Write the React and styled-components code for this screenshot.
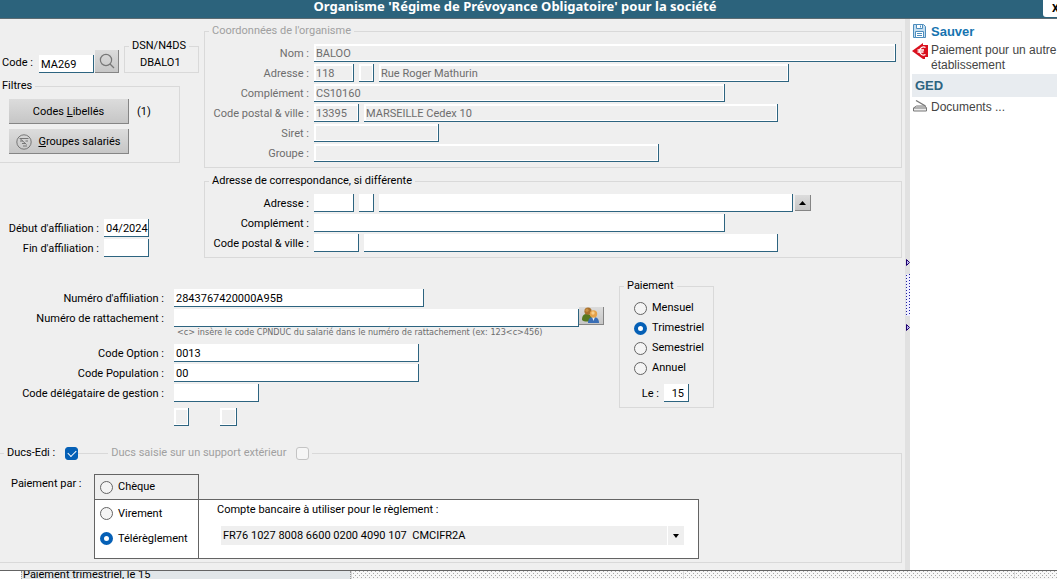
import React from 'react'
import styled, { createGlobalStyle, css } from 'styled-components'

const blue = '#2d6480'
const grey = '#efefef'
const line = '#d9d9d9'

const GlobalStyle = createGlobalStyle`
  * {
    box-sizing: border-box;
  }
  body {
    margin: 0;
    overflow: hidden;
    background: ${grey};
    color: #000;
    font-family: Roboto, "DejaVu Sans Condensed", sans-serif;
    font-size: 11px;
    line-height: 14px;
  }
  input, select, button {
    margin: 0;
    font: inherit;
    color: inherit;
  }
`

const Page = styled.div`
  display: flex;
  flex-direction: column;
  height: 100vh;
`
const TitleBar = styled.header`
  display: flex;
  align-items: flex-start;
  flex: none;
  height: 19px;
  background: #2c637c;
  border-bottom: 1px solid #5c6b72;
`
const Title = styled.h1`
  flex: 1;
  margin: 0;
  padding-right: 13px;
  font-family: "Noto Sans", sans-serif;
  font-size: 13px;
  line-height: 12px;
  font-weight: bold;
  text-align: center;
  white-space: nowrap;
  color: #fff;
`
const Close = styled.button`
  width: 14px;
  height: 17px;
  padding: 0 0 0 9px;
  overflow: hidden;
  border: 0;
  border-radius: 0 0 0 3px;
  background: #fff;
  font-weight: bold;
  line-height: 14px;
`
const Body = styled.div`
  display: flex;
  flex: 1;
  min-height: 0;
`
const Form = styled.form`
  flex: 1;
  min-width: 0;
  padding: 5px 3px 7px 0;
  white-space: nowrap;
`
const Top = styled.div`
  display: grid;
  grid-template-columns: 204px 1fr;
`
const LeftColumn = styled.div`
  padding-top: 15px;
`
const Group = styled.fieldset`
  min-width: 0;
  margin: 0;
  padding: 5px 0 4px;
  border: 1px solid ${line};
  color: ${p => (p.$muted ? '#6d6d6d' : 'inherit')};
  & + & {
    margin-top: 6px;
  }
`
const Legend = styled.legend`
  margin-left: 4px;
  padding: 0 3px;
  color: ${p => (p.$muted ? '#a0a0a0' : 'inherit')};
`
const Line = styled.div`
  display: flex;
  align-items: center;
  gap: 5px;
  height: 20px;
`
const Label = styled.label`
  flex: none;
  width: ${p => p.$w}px;
  padding: 2px ${p => p.$gap || 0}px 0 0;
  text-align: right;
`
const Field = styled.input`
  flex: ${p => (p.$w ? 'none' : 1)};
  width: ${p => (p.$w ? `${p.$w}px` : 'auto')};
  min-width: 0;
  height: 18px;
  padding: 2px 0 0 2px;
  border: 0;
  border-right: 1px solid ${blue};
  border-bottom: 1px solid ${blue};
  background: #fff;
  &:disabled {
    background: ${grey};
    color: #6d6d6d;
    box-shadow: inset 2px 2px #fff, inset -1px -1px #fff;
  }
`
const NameLine = styled(Line)`
  padding-right: 5px;
`
const CodeRow = styled.div`
  display: flex;
  align-items: flex-end;
  padding-left: 2px;
`
const CodeLabel = styled(Label)`
  line-height: 20px;
  text-align: left;
`
const raised = css`
  border: 0;
  border-right: 1px solid #858585;
  border-bottom: 1px solid #858585;
  background: linear-gradient(#dcdcdc, #c6c6c6);
`
const IconButton = styled.button`
  ${raised}
  display: flex;
  flex: none;
  align-items: center;
  justify-content: center;
  width: ${p => p.$w}px;
  height: ${p => p.$h}px;
  padding: 0;
`
const SearchButton = styled(IconButton)`
  margin: 0 5px 0 1px;
`
const PickButton = styled(IconButton)`
  margin-left: -3px;
`
const DsnGroup = styled(Group)`
  width: 75px;
  padding: 3px 0 2px 15px;
`
const DsnLegend = styled(Legend)`
  margin-left: -11px;
`
const Filters = styled(Group)`
  width: 180px;
  margin-top: 6px;
  padding: 6px 0 8px 9px;
  border-left: 0;
`
const FilterLegend = styled(Legend)`
  margin-left: -10px;
`
const FilterLine = styled.div`
  display: flex;
  align-items: center;
  gap: 8px;
  & + & {
    margin-top: 5px;
  }
`
const FilterButton = styled.button`
  ${raised}
  display: flex;
  align-items: center;
  justify-content: center;
  gap: 6px;
  width: 120px;
  height: 25px;
  padding: 2px 0 0;
`
const Dates = styled.div`
  margin-top: 55px;
`
const Middle = styled.div`
  display: flex;
  align-items: flex-start;
  padding-top: 21px;
`
const Details = styled.div`
  width: 619px;
  padding-top: 9px;
`
const WithPicker = styled.div`
  display: flex;
  align-items: center;
`
const Numbers = styled.div`
  width: 582px;
`
const Hint = styled.div`
  height: 15px;
  padding-left: 177px;
  font-family: "DejaVu Sans Condensed", sans-serif;
  font-size: 9px;
  line-height: 8px;
  color: #6d6d6d;
`
const SmallBoxes = styled.div`
  display: flex;
  gap: 31px;
  padding: 5px 0 0 174px;
`
const Frequency = styled(Group)`
  width: 95px;
`
const Choice = styled.label`
  display: flex;
  align-items: center;
  gap: 5px;
  height: ${p => p.$h || 20}px;
  padding-left: ${p => p.$left}px;
`
const DayLine = styled(Line)`
  margin-top: 5px;
`
const DayField = styled(Field)`
  padding-right: 4px;
  text-align: right;
`
const Radio = styled.input.attrs({ type: 'radio' })`
  appearance: none;
  width: 13px;
  height: 13px;
  border: 1px solid #646464;
  border-radius: 50%;
  background: #f4f4f4;
  &:checked {
    border: 4px solid #0560b6;
    background: #fff;
  }
`
const Check = styled.input.attrs({ type: 'checkbox' })`
  appearance: none;
  display: flex;
  align-items: center;
  justify-content: center;
  width: 13px;
  height: 13px;
  border: 1px solid ${p => (p.disabled ? '#c4c4c4' : '#646464')};
  border-radius: 3px;
  background: #f6f6f6;
  &:checked {
    border-color: #0560b6;
    background: #0560b6;
  }
  &:checked::after {
    content: '';
    width: 7px;
    height: 4px;
    margin-bottom: 2px;
    border: solid #fff;
    border-width: 0 0 1px 1px;
    transform: rotate(-45deg);
  }
`
const Ducs = styled(Group)`
  margin-top: 20px;
  padding: 14px 0 3px;
  border-left: 0;
`
const DucsLegend = styled.legend`
  display: flex;
  align-items: center;
  margin-left: 4px;
  padding: 0 3px;
`
const DucsLabel = styled.label`
  display: flex;
  align-items: center;
  gap: ${p => p.$gap}px;
  color: ${p => (p.$muted ? '#a0a0a0' : 'inherit')};
`
const Rule = styled.span`
  width: 30px;
  height: 1px;
  margin-right: 3px;
  background: ${line};
`
const Payment = styled.div`
  display: flex;
  gap: 12px;
  padding-left: 11px;
`
const PaymentLabel = styled.div`
  width: 71px;
  padding-top: 3px;
`
const PaymentGrid = styled.div`
  display: grid;
  grid-template-columns: 105px 500px;
`
const Cell = styled.div`
  border: 1px solid #646464;
  background: ${p => (p.$white ? '#fff' : 'transparent')};
`
const Cheque = styled(Cell)`
  grid-column: 1;
  border-bottom: 0;
`
const Modes = styled(Cell)`
  grid-column: 1;
  padding: 1px 0 7px;
`
const Account = styled(Cell)`
  grid-column: 2;
  padding: 3px 14px 0 18px;
  border-left: 0;
`
const SelectBox = styled.div`
  position: relative;
  margin: 9px 0 0 4px;
`
const Select = styled.select`
  appearance: none;
  display: block;
  width: 100%;
  height: 19px;
  padding: 0 18px 0 2px;
  border: 0;
  border-radius: 0;
  background: linear-gradient(#fff, #fff) right 16px top 0 / 1px 100% no-repeat ${grey};
`
const SelectArrow = styled.svg`
  position: absolute;
  top: 8px;
  right: 5px;
  pointer-events: none;
`
const Splitter = styled.div`
  display: flex;
  flex: none;
  flex-direction: column;
  align-items: flex-end;
  justify-content: center;
  gap: 8px;
  width: 5px;
  background: #e1e1e1;
`
const Sidebar = styled.aside`
  flex: none;
  width: 147px;
  padding: 5px 0 0 2px;
  background: #fff;
  font-family: "Liberation Sans", Arial, sans-serif;
  font-size: 12px;
  line-height: 15px;
  white-space: nowrap;
`
const Action = styled.a`
  display: flex;
  align-items: flex-start;
  gap: 3px;
  padding: ${p => p.$pad || '0'};
  font-size: ${p => (p.$main ? 13 : 12)}px;
  font-weight: ${p => (p.$main ? 'bold' : 'normal')};
  color: ${p => (p.$main ? '#1674b0' : '#444')};
  text-decoration: none;
  svg {
    flex: none;
    width: 16px;
  }
`
const SidebarTitle = styled.h2`
  margin: 0;
  padding: 0 3px;
  background: #e8ecf0;
  font-size: 13px;
  line-height: 23px;
  color: ${blue};
`
const Status = styled.footer`
  display: flex;
  flex: none;
  height: 9px;
  border-top: 1px solid #646464;
  background-color: #fff;
`
const StatusText = styled.div`
  display: flex;
  align-items: center;
  width: 330px;
  height: 8px;
  margin-left: 21px;
  padding-left: 1px;
  border: dotted #999;
  border-width: 0 1px;
  background: #e1e6e9;
  overflow: hidden;
`
const Hatch = styled.div`
  flex: ${p => (p.$w ? 'none' : 1)};
  width: ${p => p.$w}px;
  border-left: 1px solid #d8d8d8;
  background:
    conic-gradient(from 270deg at 1px 1px, #aaa 90deg, #0000 0) 3px 0 / 4px 4px,
    conic-gradient(from 270deg at 1px 1px, #aaa 90deg, #0000 0) 1px 2px / 4px 4px,
    #f8f8f8;
`

const SearchIcon = () => (
  <svg width="16" height="16" viewBox="0 0 16 16" fill="none" stroke="#777" strokeWidth="1.2">
    <circle cx="7" cy="7" r="5.6" />
    <path d="M11 11l4 4" />
  </svg>
)

const FilterIcon = () => (
  <svg width="16" height="16" viewBox="0 0 16 16" fill="none" stroke="#777">
    <circle cx="8" cy="8" r="7.2" />
    <path d="M3.500 4.500h9M4 7h3M9.500 7H12M6 9.500h4M7 12h4M4 4.500l6.500 6" />
  </svg>
)

const PeopleIcon = () => (
  <svg width="20" height="17" viewBox="0 0 20 17">
    <path d="M1 13c0-5 2-6 5-6s5 2 5 6c-2 2-8 2-10 0z" fill="#55781f" />
    <circle cx="7" cy="4.2" r="3.6" fill="#a8702c" />
    <circle cx="6" cy="3.2" r="1.6" fill="#c99045" />
    <path d="M7 16c0-4 2-6 5.500-6s5.500 2 5.500 6z" fill="#3a6eb5" />
    <path d="M11 10h3l-1.500 4z" fill="#e5eefa" />
    <circle cx="12.500" cy="7" r="3.700" fill="#e5a24b" />
    <circle cx="12" cy="6" r="1.700" fill="#f8cf8c" />
  </svg>
)

const SaveIcon = () => (
  <svg width="16" height="14" viewBox="0 0 16 14" fill="#c5def0" stroke="#4c8dbd">
    <path d="M1.500 .5h10l2 2v11h-12z" />
    <path d="M4.500 .5h6v4h-6z" fill="#fff" />
    <path d="M8.500 1.500v2" />
    <path d="M3.500 7.500h8v6h-8z" fill="#fff" />
    <path d="M5 9.500h5M5 11.500h5" />
  </svg>
)

const EuroIcon = () => (
  <svg width="16" height="16" viewBox="0 0 16 16">
    <path d="M0 8l11-8v2h5v12h-3v2h-2z" fill="#d9101e" />
    <path d="M13.500 4.500a4 4 0 1 0 0 7M5.500 7h6.500M5.500 9h6" fill="none" stroke="#fff" strokeWidth="1.300" />
  </svg>
)

const ScannerIcon = () => (
  <svg width="16" height="12" viewBox="0 0 16 12" fill="none" stroke="#777">
    <path d="M4 .5l9.500 5.500" strokeWidth="1.300" />
    <path d="M1.500 8l3-2h8.500l1.500 2v3h-13z" fill="#eee" />
    <path d="M1.500 8h13" />
  </svg>
)

const Grip = () => (
  <svg width="4" height="7" viewBox="0 0 4 7">
    <path d="M.5 .5v6l3-3z" fill="#b9b9ee" stroke="#200070" />
  </svg>
)

const GripDots = () => (
  <svg width="4" height="42" viewBox="0 0 4 42">
    <rect width="4" height="42" fill="#eef" />
    <path d="M.5 1v41" stroke="#2020a0" strokeDasharray="1 2" />
    <path d="M3.500 0v42" stroke="#2020a0" strokeDasharray="1 2" />
  </svg>
)

const PostalAddress = ({ id, disabled, number, street, extra, zip, city, streetWidth, children }) => (
  <>
    <Line>
      <Label htmlFor={`${id}-num`} $w={104}>Adresse :</Label>
      <Field id={`${id}-num`} $w={40} disabled={disabled} defaultValue={number} />
      <Field aria-label="Indice de répétition" $w={15} disabled={disabled} />
      <Field aria-label="Voie" $w={streetWidth} disabled={disabled} defaultValue={street} />
      {children}
    </Line>
    <Line>
      <Label htmlFor={`${id}-extra`} $w={104}>Complément :</Label>
      <Field id={`${id}-extra`} $w={411} disabled={disabled} defaultValue={extra} />
    </Line>
    <Line>
      <Label htmlFor={`${id}-zip`} $w={104}>Code postal &amp; ville :</Label>
      <Field id={`${id}-zip`} $w={45} disabled={disabled} defaultValue={zip} />
      <Field aria-label="Ville" $w={414} disabled={disabled} defaultValue={city} />
    </Line>
  </>
)

const DetailLine = ({ id, label, width, value }) => (
  <Line>
    <Label htmlFor={id} $w={169} $gap={5}>{label}</Label>
    <Field id={id} $w={width} defaultValue={value} />
  </Line>
)

const App = () => (
  <Page>
    <GlobalStyle />
    <TitleBar>
      <Title>Organisme 'Régime de Prévoyance Obligatoire' pour la société</Title>
      <Close type="button" aria-label="Fermer">X</Close>
    </TitleBar>
    <Body>
      <Form>
        <Top>
          <LeftColumn>
            <CodeRow>
              <CodeLabel htmlFor="code" $w={37}>Code :</CodeLabel>
              <Field id="code" $w={55} defaultValue="MA269" />
              <SearchButton type="button" aria-label="Rechercher" $w={24} $h={23}>
                <SearchIcon />
              </SearchButton>
              <DsnGroup>
                <DsnLegend>DSN/N4DS</DsnLegend>
                DBALO1
              </DsnGroup>
            </CodeRow>
            <Filters>
              <FilterLegend>Filtres</FilterLegend>
              <FilterLine>
                <FilterButton type="button"><span>Codes <u>L</u>ibellés</span></FilterButton>
                (1)
              </FilterLine>
              <FilterLine>
                <FilterButton type="button">
                  <FilterIcon />
                  <span><u>G</u>roupes salariés</span>
                </FilterButton>
              </FilterLine>
            </Filters>
            <Dates>
              <Line>
                <Label htmlFor="debut" $w={99}>Début d'affiliation :</Label>
                <Field id="debut" $w={45} defaultValue="04/2024" />
              </Line>
              <Line>
                <Label htmlFor="fin" $w={99}>Fin d'affiliation :</Label>
                <Field id="fin" $w={45} />
              </Line>
            </Dates>
          </LeftColumn>
          <div>
            <Group $muted>
              <Legend $muted>Coordonnées de l'organisme</Legend>
              <NameLine>
                <Label htmlFor="nom" $w={104}>Nom :</Label>
                <Field id="nom" disabled defaultValue="BALOO" />
              </NameLine>
              <PostalAddress
                id="org"
                disabled
                number="118"
                street="Rue Roger Mathurin"
                streetWidth={410}
                extra="CS10160"
                zip="13395"
                city="MARSEILLE Cedex 10"
              />
              <Line>
                <Label htmlFor="siret" $w={104}>Siret :</Label>
                <Field id="siret" $w={125} disabled />
              </Line>
              <Line>
                <Label htmlFor="groupe" $w={104}>Groupe :</Label>
                <Field id="groupe" $w={345} disabled />
              </Line>
            </Group>
            <Group>
              <Legend>Adresse de correspondance, si différente</Legend>
              <PostalAddress id="corr" streetWidth={414}>
                <PickButton type="button" aria-label="Effacer l'adresse" $w={16} $h={16}>
                  <svg width="7" height="4" viewBox="0 0 7 4"><path d="M0 4l3.500-4L7 4z" /></svg>
                </PickButton>
              </PostalAddress>
            </Group>
          </div>
        </Top>

        <Middle>
          <Details>
            <WithPicker>
              <Numbers>
                <DetailLine id="affiliation" label="Numéro d'affiliation :" width={250} value="2843767420000A95B" />
                <DetailLine id="rattachement" label="Numéro de rattachement :" width={405} />
                <Hint>&lt;c&gt; insère le code CPNDUC du salarié dans le numéro de rattachement (ex: 123&lt;c&gt;456)</Hint>
              </Numbers>
              <PickButton type="button" aria-label="Choisir un salarié" $w={25} $h={18}>
                <PeopleIcon />
              </PickButton>
            </WithPicker>
            <DetailLine id="option" label="Code Option :" width={245} value="0013" />
            <DetailLine id="population" label="Code Population :" width={245} value="00" />
            <DetailLine id="delegataire" label="Code délégataire de gestion :" width={85} />
            <SmallBoxes>
              <Field aria-label="Clé 1" $w={15} disabled />
              <Field aria-label="Clé 2" $w={17} disabled />
            </SmallBoxes>
          </Details>
          <Frequency>
            <Legend>Paiement</Legend>
            {['Mensuel', 'Trimestriel', 'Semestriel', 'Annuel'].map(name => (
              <Choice key={name} $left={14}>
                <Radio name="frequence" defaultChecked={name === 'Trimestriel'} />
                {name}
              </Choice>
            ))}
            <DayLine>
              <Label htmlFor="jour" $w={39}>Le :</Label>
              <DayField id="jour" $w={25} defaultValue="15" />
            </DayLine>
          </Frequency>
        </Middle>

        <Ducs>
          <DucsLegend>
            <DucsLabel $gap={10}>
              Ducs-Edi :
              <Check defaultChecked />
            </DucsLabel>
            <Rule />
            <DucsLabel $gap={10} $muted>
              Ducs saisie sur un support extérieur
              <Check disabled />
            </DucsLabel>
          </DucsLegend>
          <Payment>
            <PaymentLabel>Paiement par :</PaymentLabel>
            <PaymentGrid>
              <Cheque>
                <Choice $left={5} $h={24}><Radio name="mode" />Chèque</Choice>
              </Cheque>
              <Modes $white>
                <Choice $left={5} $h={25}><Radio name="mode" />Virement</Choice>
                <Choice $left={5} $h={25}><Radio name="mode" defaultChecked />Télérèglement</Choice>
              </Modes>
              <Account $white>
                <label htmlFor="compte">Compte bancaire à utiliser pour le règlement :</label>
                <SelectBox>
                  <Select id="compte">
                    <option>FR76 1027 8008 6600 0200 4090 107&nbsp; CMCIFR2A</option>
                  </Select>
                  <SelectArrow width="6" height="4" viewBox="0 0 6 4"><path d="M0 0h6L3 4z" /></SelectArrow>
                </SelectBox>
              </Account>
            </PaymentGrid>
          </Payment>
        </Ducs>
      </Form>
      <Splitter>
        <Grip />
        <GripDots />
        <Grip />
      </Splitter>
      <Sidebar>
        <Action href="#sauver" $main><SaveIcon />Sauver</Action>
        <Action href="#paiement" $pad="4px 0 1px"><EuroIcon /><span>Paiement pour un autre<br />établissement</span></Action>
        <SidebarTitle>GED</SidebarTitle>
        <Action href="#documents" $pad="3px 0"><ScannerIcon />Documents ...</Action>
      </Sidebar>
    </Body>
    <Status>
      <StatusText>Paiement trimestriel, le 15</StatusText>
      <Hatch $w={332} />
      <Hatch $w={331} />
      <Hatch />
    </Status>
  </Page>
)

export default App
